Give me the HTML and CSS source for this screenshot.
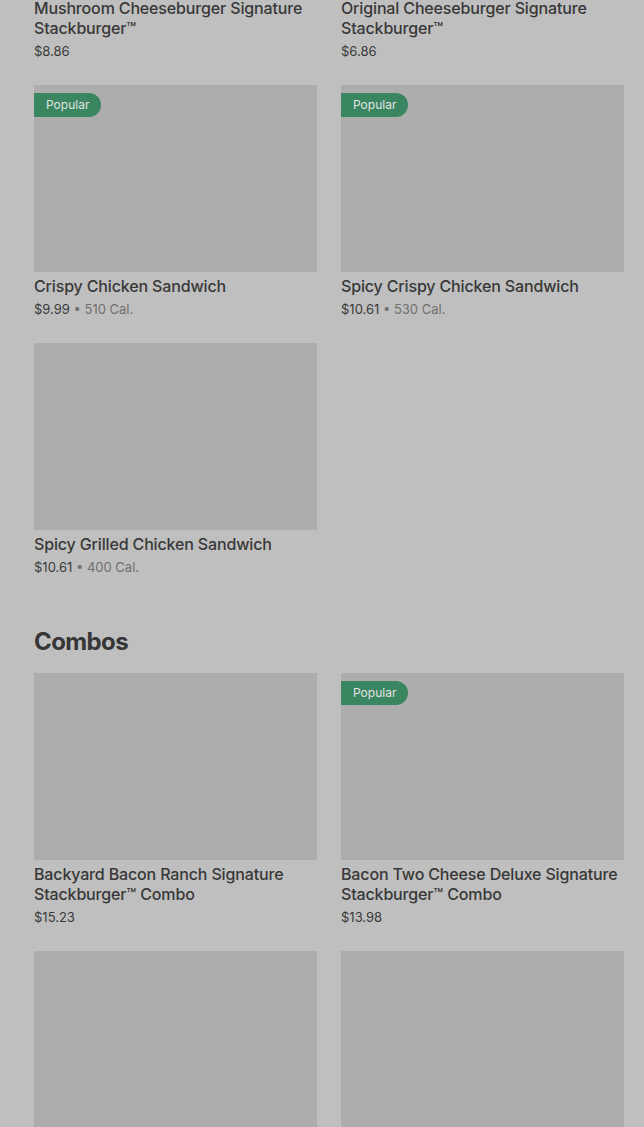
FILE: index.html
```html
<!DOCTYPE html>
<html lang="en">
<head>
    <meta charset="UTF-8">
    <meta name="viewport" content="width=device-width, initial-scale=1.0">
    <title>Menu</title>
    <link rel="stylesheet" href="styles.css">
</head>
<body>
    <main class="menu">
        <section class="categorie categorie-scrolled">
            <div class="produits">
                <div class="produit">
                    <div class="produit-img"></div>
                    <h3>Mushroom Cheeseburger Signature Stackburger™</h3>
                    <p class="prix">$8.86</p>
                </div>
                <div class="produit">
                    <div class="produit-img"></div>
                    <h3>Original Cheeseburger Signature Stackburger™</h3>
                    <p class="prix">$6.86</p>
                </div>
                <div class="produit">
                    <div class="produit-img"><span class="badge">Popular</span></div>
                    <h3>Crispy Chicken Sandwich</h3>
                    <p class="prix">$9.99 <span class="cal">• 510 Cal.</span></p>
                </div>
                <div class="produit">
                    <div class="produit-img"><span class="badge">Popular</span></div>
                    <h3>Spicy Crispy Chicken Sandwich</h3>
                    <p class="prix">$10.61 <span class="cal">• 530 Cal.</span></p>
                </div>
                <div class="produit">
                    <div class="produit-img"></div>
                    <h3>Spicy Grilled Chicken Sandwich</h3>
                    <p class="prix">$10.61 <span class="cal">• 400 Cal.</span></p>
                </div>
            </div>
        </section>
        <section class="categorie">
            <h2>Combos</h2>
            <div class="produits">
                <div class="produit">
                    <div class="produit-img"></div>
                    <h3>Backyard Bacon Ranch Signature Stackburger™ Combo</h3>
                    <p class="prix">$15.23</p>
                </div>
                <div class="produit">
                    <div class="produit-img"><span class="badge">Popular</span></div>
                    <h3>Bacon Two Cheese Deluxe Signature Stackburger™ Combo</h3>
                    <p class="prix">$13.98</p>
                </div>
                <div class="produit">
                    <div class="produit-img"></div>
                </div>
                <div class="produit">
                    <div class="produit-img"></div>
                </div>
            </div>
        </section>
    </main>
</body>
</html>
```

FILE: styles.css
```css
body {
    font-family: Inter, "Noto Sans", sans-serif;
    margin: 0;
    padding: 0;
    background-color: #bfbfbf;
    color: #383838;
    overflow: hidden;
}
.menu {
    padding: 0 20px 0 34px;
}
/* page is scrolled: first row is cut off at the top */
.categorie-scrolled {
    margin-top: -193px;
}
.categorie h2 {
    margin: 50px 0 15px;
    font-size: 24px;
    line-height: 32px;
    font-weight: 700;
    letter-spacing: -0.6px;
    color: #363636;
}
.produits {
    display: grid;
    grid-template-columns: 1fr 1fr;
    column-gap: 24px;
    row-gap: 25px;
}
.produit-img {
    position: relative;
    height: 187px;
    background-color: #adadad;
}
.badge {
    position: absolute;
    top: 8px;
    left: 0;
    height: 24px;
    line-height: 24px;
    padding: 0 12px;
    font-size: 12px;
    color: #e2e2e2;
    background-color: #3a8660;
    border-radius: 0 12px 12px 0;
}
.produit h3 {
    margin: 4px 0 0;
    font-size: 16px;
    line-height: 20px;
    font-weight: 500;
    letter-spacing: -0.15px;
}
.prix {
    margin: 4px 0 0;
    font-size: 13px;
    line-height: 18px;
    color: #3a3a3a;
}
.cal {
    color: #707070;
}
```
